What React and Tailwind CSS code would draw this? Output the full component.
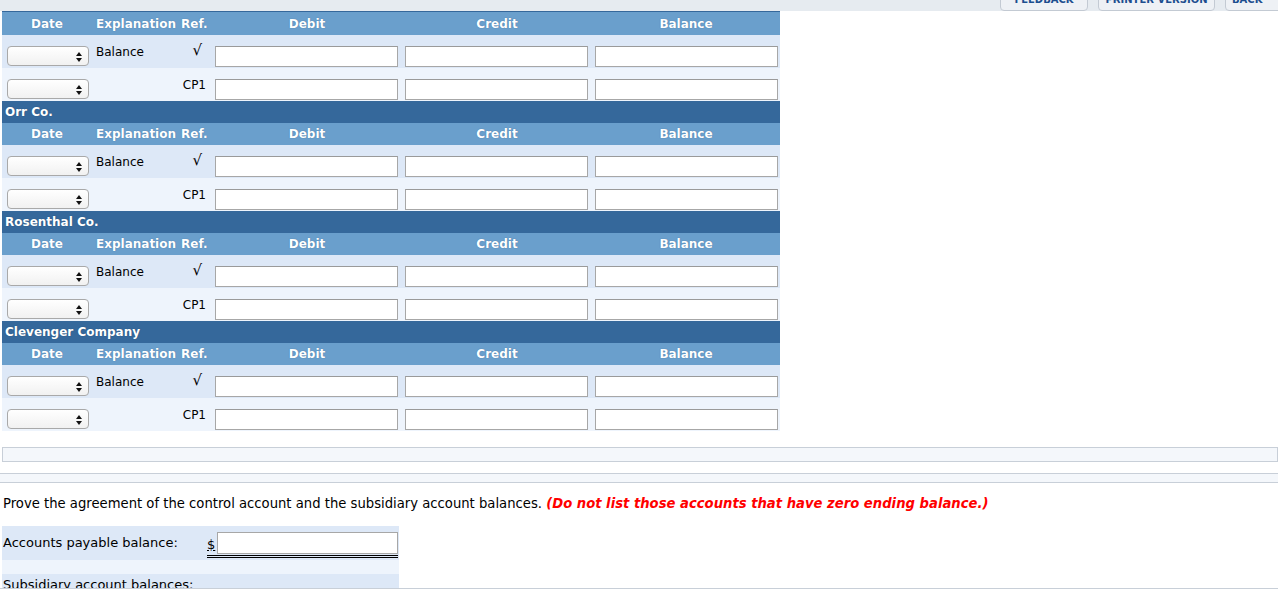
import { useState } from "react";

const accounts = ["", "Orr Co.", "Rosenthal Co.", "Clevenger Company"];

const SelectBox = () => (
  <div className="relative w-[82px] h-[20px] rounded-[4px] border border-[#a9a9a9] bg-gradient-to-b from-white to-[#f1f1f1]">
    <svg className="absolute right-[6px] top-[5px]" width="6" height="10" viewBox="0 0 6 10">
      <path d="M3 0 L6 4 L0 4 Z" fill="#111" />
      <path d="M3 10 L6 6 L0 6 Z" fill="#111" />
    </svg>
  </div>
);

const Field = ({ className = "" }) => {
  const [value, setValue] = useState("");
  return (
    <input
      type="text"
      value={value}
      onChange={(e) => setValue(e.target.value)}
      className={
        "h-[21px] bg-white border border-[#a7a7a7] border-t-[#9a9a9a] outline-none px-1 text-[12px] " +
        className
      }
    />
  );
};

const HeaderRow = ({ first }) => (
  <div
    className={
      "flex items-center bg-[#6a9fcc] text-white font-bold text-[12px] [text-shadow:0_0_1px_#3a6a99] " +
      (first ? "h-[23px]" : "h-[22px]")
    }
  >
    <div className="w-[90px] text-center">Date</div>
    <div className="w-[86px] pl-[4px]">Explanation</div>
    <div className="w-[34px] pl-[3px]">Ref.</div>
    <div className="w-[190px] text-center">Debit</div>
    <div className="w-[190px] text-center">Credit</div>
    <div className="w-[188px] text-center">Balance</div>
  </div>
);

const EntryRow = ({ shade, explanation, reference, check }) => (
  <div className={"flex h-[33px] " + shade}>
    <div className="w-[90px] pl-[5px] flex items-end pb-[2px]">
      <SelectBox />
    </div>
    <div className="w-[86px] pl-[4px] pt-[8px] text-[12px] text-black">{explanation}</div>
    <div
      className={
        "w-[34px] text-right text-black " +
        (check ? "pr-[10px] pt-[6px] text-[15px] leading-[18px]" : "pr-[6px] pt-[8px] text-[12px]")
      }
    >
      {reference}
    </div>
    <div className="w-[190px] pl-[3px] flex items-end pb-[1px]">
      <Field className="w-[183px]" />
    </div>
    <div className="w-[190px] pl-[3px] flex items-end pb-[1px]">
      <Field className="w-[183px]" />
    </div>
    <div className="w-[188px] pl-[3px] flex items-end pb-[1px]">
      <Field className="w-[183px]" />
    </div>
  </div>
);

const Ledger = ({ name, first }) => (
  <div>
    {!first && (
      <div className="h-[22px] bg-[#35689b] text-white font-bold text-[12px] pl-[3px] flex items-center [text-shadow:0_0_1px_#1d4670]">
        {name}
      </div>
    )}
    <HeaderRow first={first} />
    <EntryRow shade="bg-[#dde8f7]" explanation="Balance" reference="√" check />
    <EntryRow shade="bg-[#eef4fc]" explanation="" reference="CP1" />
  </div>
);

export default function App() {
  const [payable, setPayable] = useState("");

  return (
    <div className="h-[595px] bg-white overflow-hidden font-['DejaVu_Sans',Verdana,sans-serif]">
      <div className="h-[589px] overflow-hidden border-b border-[#c8cfd8]">
        {/* toolbar strip, buttons scrolled mostly out of view */}
        <div className="h-[11px] bg-[#e6ebf0] flex justify-end items-end overflow-hidden">
          <div className="h-[28px] px-[10px] mr-[10px] w-[88px] rounded-b-[4px] border border-[#c3cad3] bg-[#eef1f5] text-[10px] font-bold text-[#1d4e8f] flex items-end justify-center pb-[3px] overflow-hidden">
            FEEDBACK
          </div>
          <div className="h-[28px] w-[117px] mr-[10px] rounded-b-[4px] border border-[#c3cad3] bg-[#eef1f5] text-[10px] font-bold text-[#1d4e8f] flex items-end justify-center pb-[3px] overflow-hidden">
            PRINTER VERSION
          </div>
          <div className="h-[28px] w-[57px] -mr-[4px] rounded-b-[4px] border border-[#c3cad3] bg-[#eef1f5] text-[10px] font-bold text-[#1d4e8f] flex items-end justify-start pl-[6px] pb-[3px] overflow-hidden">
            BACK
          </div>
        </div>

        <div className="ml-[2px] w-[778px] border-t border-[#35689b]">
          {accounts.map((name, i) => (
            <Ledger key={i} name={name} first={i === 0} />
          ))}
        </div>

        <div className="mt-[16px] ml-[2px] h-[15px] border border-[#c8cfd8] bg-[#f4f7fb]" />
        <div className="mt-[11px] h-[10px] border-y border-[#c8cfd8] bg-[#f4f7fb]" />

        <p className="mt-[13px] pl-[3px] text-[13.2px] text-black leading-[16px]">
          Prove the agreement of the control account and the subsidiary account balances.{" "}
          <span className="text-[#ff0000] font-bold italic">
            (Do not list those accounts that have zero ending balance.)
          </span>
        </p>

        <div className="mt-[14px] ml-[2px] w-[397px] text-[13px] text-black">
          <div className="h-[34px] bg-[#dde8f7] flex">
            <div className="w-[205px] pl-[1px] pt-[7px]">Accounts payable balance:</div>
            <div className="flex items-end pb-[1px] border-b-[3px] border-double border-black h-[33px] mt-[-1px]">
              <span className="underline leading-[14px] pb-[2px] pr-[2px]">$</span>
              <input
                type="text"
                value={payable}
                onChange={(e) => setPayable(e.target.value)}
                className="w-[181px] h-[22px] bg-white border border-[#a7a7a7] outline-none px-1 text-[12px]"
              />
            </div>
          </div>
          <div className="h-[14px] bg-[#eef4fc]" />
          <div className="h-[20px] bg-[#dde8f7] pl-[1px] pt-[1px]">Subsidiary account balances:</div>
        </div>
      </div>
    </div>
  );
}
